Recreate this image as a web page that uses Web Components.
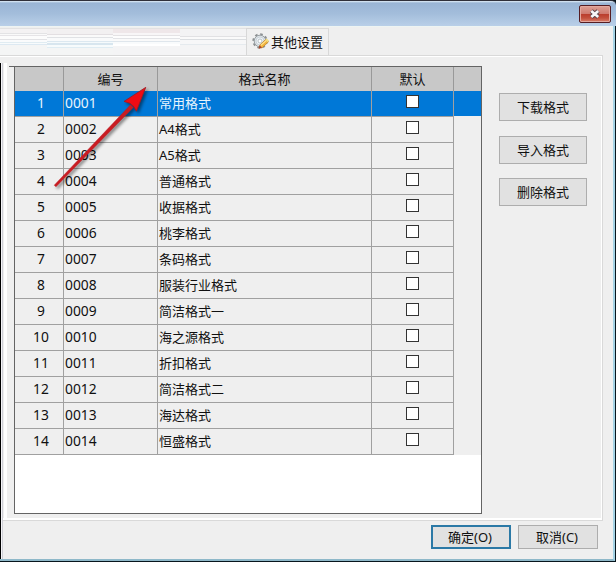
<!DOCTYPE html>
<html lang="zh-CN">
<head>
<meta charset="utf-8">
<title>其他设置</title>
<style>
html, body { margin: 0; height: 100%; overflow: hidden; }
body { font: 13px/20px "Noto Sans", "Noto Sans CJK SC", sans-serif; color: #101010; }
</style>
</head>
<body>
<settings-window>
  <title-bar slot="title"></title-bar>
  <tab-strip slot="tabs">其他设置</tab-strip>
  <format-grid slot="grid"></format-grid>
  <push-button slot="side">下载格式</push-button>
  <push-button slot="side" style="margin-top:15px">导入格式</push-button>
  <push-button slot="side" style="margin-top:14px">删除格式</push-button>
  <push-button slot="foot" class="primary">确定(O)</push-button>
  <push-button slot="foot">取消(C)</push-button>
</settings-window>
<script>
const define = (name, html) => customElements.define(name, class extends HTMLElement {
  constructor() {
    super();
    this.attachShadow({ mode: 'open' }).innerHTML = html;
  }
});

define('title-bar', `
<style>
:host { display: flex; justify-content: flex-end; box-sizing: border-box; height: 26px; padding: 4px 5px 0 0;
  border-top: 1px solid #30303a; border-radius: 0 5px 0 0;
  background: linear-gradient(#e2eef8 0, #9ab5d5 2px, #a3bddb 50%, #b9cfe8 100%); }
.close { box-sizing: border-box; width: 32px; height: 18px; border: 1px solid #551d22; border-radius: 2px;
  box-shadow: inset 0 0 0 1px #e3a79d;
  background: linear-gradient(#dda095 0, #cf7b70 47%, #b93c2c 50%, #c34f3c 75%, #d9806b 100%); }
svg { display: block; margin: 2px 0 0 9px; }
</style>
<div class="close"><svg width="12" height="12" viewBox="0 0 12 12">
<path d="M2.3 3 9.2 9M9.2 3 2.3 9" stroke="#59454b" stroke-width="4.4"/>
<path d="M2.3 3 9.2 9M9.2 3 2.3 9" stroke="#f8f8f8" stroke-width="2.7"/></svg></div>`);

define('tab-strip', `
<style>
:host { display: flex; box-sizing: border-box; height: 29px; padding-top: 1px; background: #efefef; border-top: 1px solid #eef4f2; }
.blur { width: 246px; display: grid; grid-template-columns: 47px 66px 67px 66px; height: 27px; border-top: 1px solid #e2e2e2; box-sizing: border-box; background: #f4f4f4; }
.blur i { background: linear-gradient(#f4f2f3 0 4px, #e3e3e5 4px 5px, #fafafa 5px 6px, #e6e4e7 6px 7px, #fcfcfc 7px 10px, #e2e2e5 10px 11px, #fafbfc 11px 13px, #e0ecf2 13px 14px, #f8fbfc 14px 15px, #dde9f2 15px 16px, #f4f5f5 16px); }
.blur i:nth-child(2) { background: linear-gradient(#f2f0f1 0 5px, #e3dfe2 5px 6px, #fafafa 6px 8px, #e0e2e5 8px 9px, #f9fafb 9px 12px, #dce8f0 12px 13px, #f5fafc 13px 14px, #d8e6ef 14px 16px, #f7fbfc 16px 18px, #dfecf3 18px 19px, #f4f5f5 19px); }
.blur i:nth-child(3) { background: linear-gradient(#efe7e9 0 4px, #f8f6f7 4px 6px, #e4e2e4 6px 7px, #fdfdfd 7px 9px, #e2e3e6 9px 10px, #fafafa 10px 12px, #dfe6ec 12px 13px, #f9fbfc 13px 15px, #fff 15px 17px, #f4f4f5 17px); }
.blur i:nth-child(4) { background: linear-gradient(#f3f3f4 0 7px, #e1e1e3 7px 8px, #fafafa 8px 10px, #dadde0 10px 11px, #f7f7f8 11px 15px, #e5eaee 15px 16px, #f4f4f5 16px); }
.tab { display: flex; align-items: center; box-sizing: border-box; width: 83px; height: 27px; padding-left: 5px;
  border: 1px solid #d8d8d8; border-bottom: 0; background: #f0f0f0; }
svg { flex: none; margin-right: 1px; }
span { white-space: nowrap; margin-top: -1px; }
</style>
<div class="blur"><i></i><i></i><i></i><i></i></div>
<div class="tab">
<svg width="18" height="18" viewBox="0 0 18 18">
<circle cx="8" cy="8" r="6.7" fill="none" stroke="#8d9193" stroke-width="2" stroke-dasharray="2.6 2.66"/>
<circle cx="8" cy="8" r="5.8" fill="#dce2e6" stroke="#989fa3" stroke-width="1"/>
<circle cx="8" cy="8" r="4" fill="#edf3f7" stroke="#c3cbd0" stroke-width=".8"/>
<circle cx="8" cy="8" r="2" fill="#fff" stroke="#aab2b7" stroke-width=".8"/>
<path d="M7 15 8 11.8 14 6.2 16.5 8.8 10.2 14.8Z" fill="#f2b33c" stroke="#b67c28" stroke-width=".7"/>
<path d="M8.8 12.4 14.6 7.1" stroke="#ffe795" stroke-width="1.2"/>
<path d="M13.2 6.8 14.8 5.4 17 7.8 15.6 9.3Z" fill="#efdc83"/>
<path d="M6.6 15.4 7.6 12.3 10 14.7Z" fill="#a84335"/>
</svg><span><slot></slot></span></div>`);

define('check-box', `<style>:host { display: block; box-sizing: border-box; width: 13px; height: 13px; border: 1px solid #333; background: #fff; }</style>`);

define('push-button', `
<style>
:host { display: flex; align-items: center; justify-content: center; box-sizing: border-box; width: 88px; height: 28px;
  border: 1px solid #adadad; background: #e1e1e1; white-space: nowrap; }
:host([slot=foot]) { width: 80px; height: 24px; padding-right: 2px; }
:host([slot=side]) { padding-bottom: 1px; }
:host(.primary) { border: 2px solid #2b79a6; }
</style><slot></slot>`);

define('grid-row', `
<style>
:host { display: grid; grid-template-columns: 49px 94px 214px 82px 27px; height: 26px; }
div { box-sizing: border-box; border-right: 1px solid #a0a0a0; border-bottom: 1px solid #a0a0a0; padding-left: 1px;
  background: #efefef; white-space: nowrap; line-height: 24px; }
.no, .code { font-size: 13.8px; line-height: 24px; }
.no { text-align: center; padding-left: 4px; }
.box { display: flex; justify-content: center; padding: 4px 0 0 0; }
.rest { border: 0; }
:host(.on) div { background: #0078d7; color: #e8f4fd; }
:host(.on) .rest { border-bottom: 1px solid #efefef; }
</style>
<div class="no"><slot name="no"></slot></div><div class="code"><slot name="code"></slot></div>
<div><slot></slot></div><div class="box"><check-box></check-box></div><div class="rest"></div>`);

const names = ['常用格式', 'A4格式', 'A5格式', '普通格式', '收据格式', '桃李格式', '条码格式', '服装行业格式', '简洁格式一', '海之源格式', '折扣格式', '简洁格式二', '海达格式', '恒盛格式'];
define('format-grid', `
<style>
:host { display: block; position: relative; box-sizing: border-box; width: 468px; height: 448px; border: 1px solid #646464; background: #fff; }
:host::before { content: ""; position: absolute; left: -6px; top: -1px; width: 6px; height: 1px; background: #646464; }
.head { display: grid; grid-template-columns: 49px 94px 214px 82px 27px; height: 24px; background: #c8c8c8; }
.head div { box-sizing: border-box; border-right: 1px solid #999; border-bottom: 1px solid #a0a0a0; text-align: center; line-height: 24px; }
.head div:last-child { border-right: 0; }
</style>
<div class="head"><div></div><div>编号</div><div>格式名称</div><div>默认</div><div></div></div>
${names.map((n, i) => `<grid-row${i ? '' : ' class="on"'}><span slot="no">${i + 1}</span><span slot="code">${String(i + 1).padStart(4, '0')}</span>${n}</grid-row>`).join('')}`);

define('pointer-arrow', `
<style>:host { position: absolute; left: 45px; top: 80px; width: 115px; height: 115px; } svg { display: block; filter: drop-shadow(2px 2px 1.5px rgba(0,0,0,.45)); }</style>
<svg width="115" height="115" viewBox="0 0 115 115">
<path d="M9.2 105.2 85.5 24.8 88.3 27.4 11 106.8Z" fill="#c91c22" stroke="#b51a20" stroke-width=".4"/>
<path d="M100.7 7.4 79 21.4 84.8 23.2 88.8 26.6 91.4 31.2Z" fill="#f00b14" stroke="#a31820" stroke-width=".9"/>
</svg>`);

define('settings-window', `
<style>
:host { display: flex; flex-direction: column; position: relative; box-sizing: border-box; width: 616px; height: 562px; background: #07151d; }
.frame { display: flex; flex-direction: column; flex: 1; min-height: 0; box-sizing: border-box; margin: 0 1px 1px 0; border-right: 2px solid #a5d3e5; border-bottom: 2px solid #8eb8c9; background: #efefef; }
.row { display: flex; flex: 1; min-height: 0; }
.edge { width: 3px; background: linear-gradient(#d9d9d9 0 1px, #fff 1px 2px, #efefef 2px 8px, transparent 8px), linear-gradient(90deg, #000 0 1px, #f5f5f8 1px 2px, #cfcfd6 2px); }
.col { flex: 1; min-width: 0; display: flex; flex-direction: column; }
.pane { display: flex; align-items: flex-start; box-sizing: border-box; width: 600px; height: 466px; padding: 10px 0 0 11px;
  border: 1px solid #d9d9d9; border-left: 0; box-shadow: inset 0 1px #fff, inset -1px -2px #fff;
  background: linear-gradient(#fff, #fff) 1px 7px / 3px 100% no-repeat; }
.side { display: flex; flex-direction: column; padding: 27px 0 0 17px; }
.foot { display: flex; justify-content: flex-end; gap: 7px; padding: 4px 15px 0 0; }
</style>
<slot name="title"></slot>
<div class="frame"><slot name="tabs"></slot>
<div class="row"><div class="edge"></div><div class="col">
<div class="pane"><slot name="grid"></slot><div class="side"><slot name="side"></slot></div></div>
<div class="foot"><slot name="foot"></slot></div>
</div></div></div>
<pointer-arrow></pointer-arrow>`);
</script>
</body>
</html>
